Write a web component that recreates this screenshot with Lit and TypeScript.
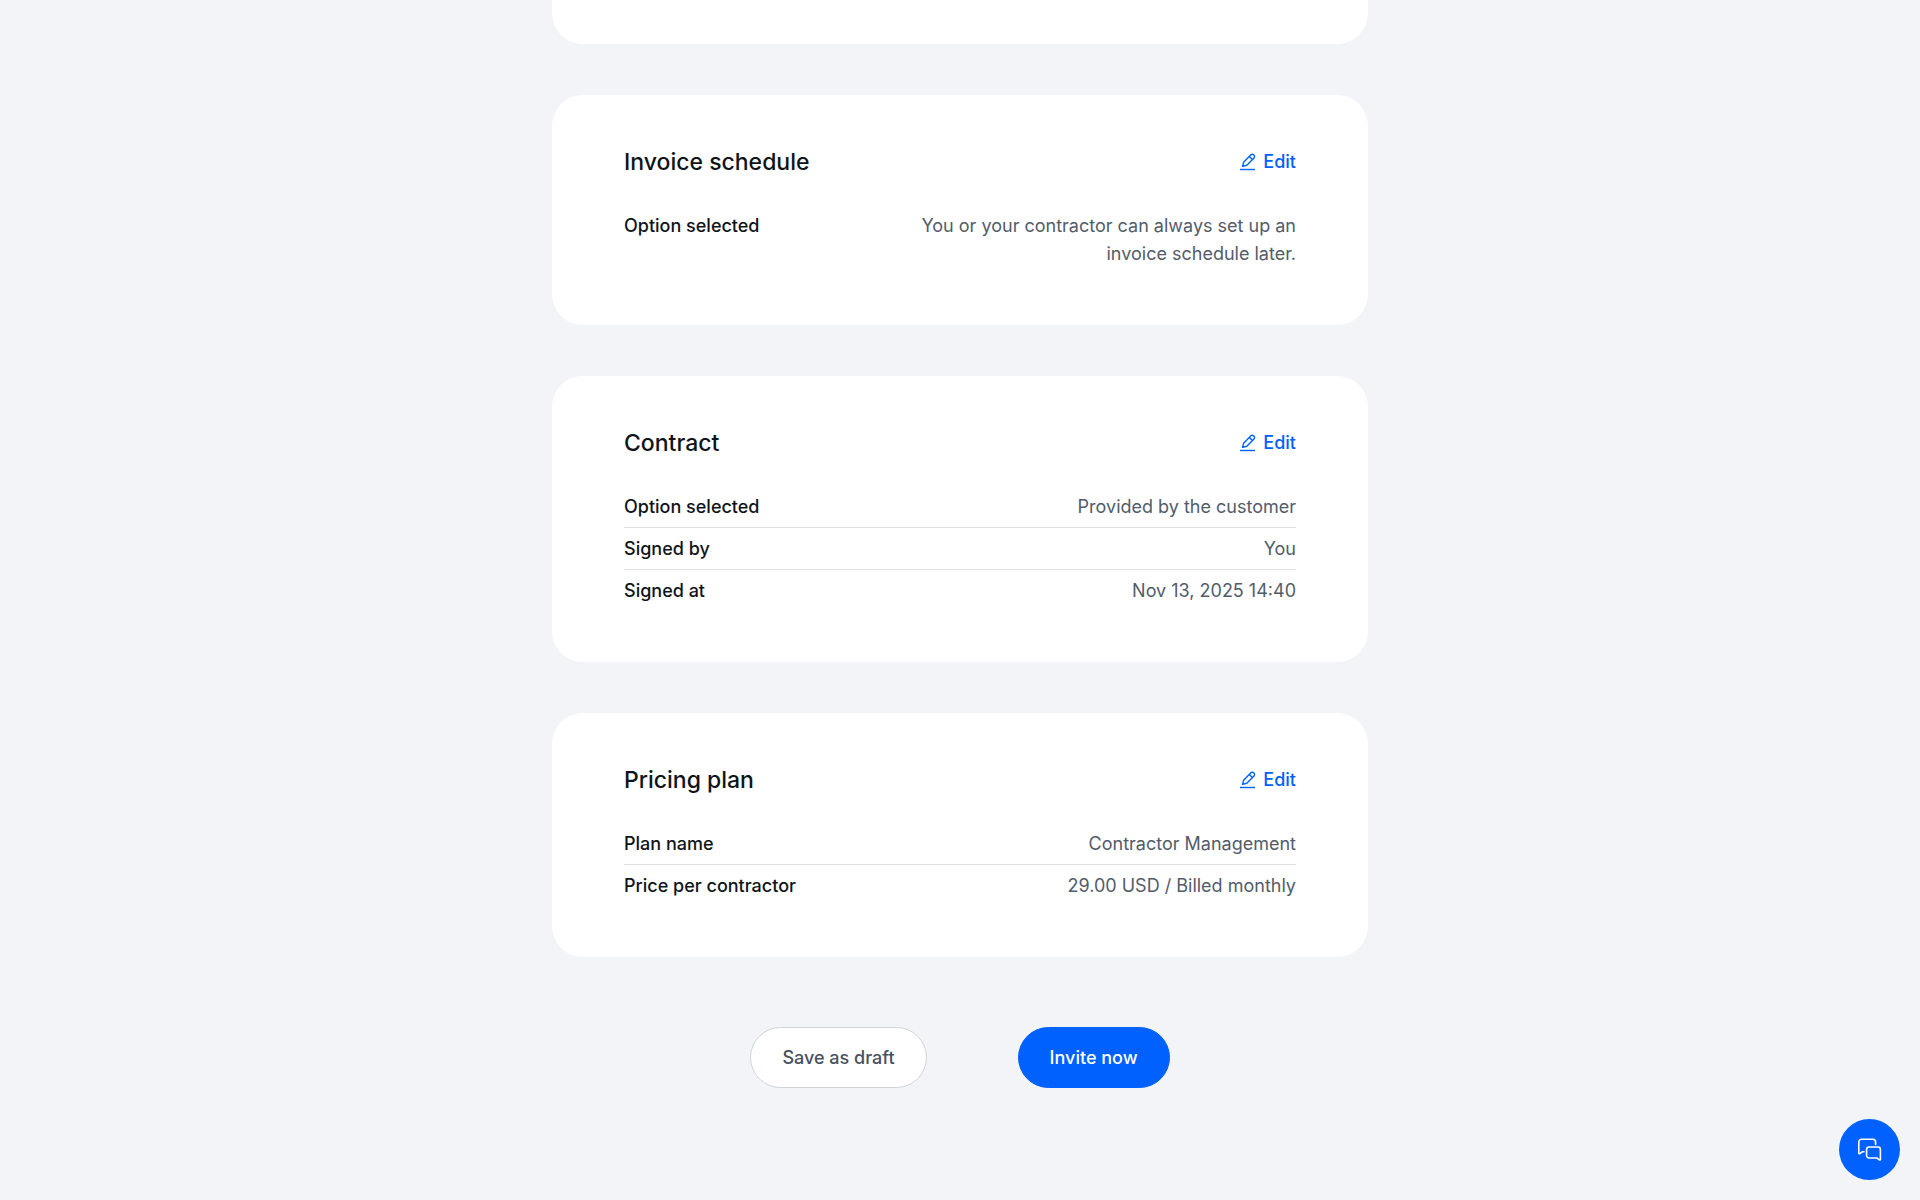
import { LitElement, html, css, svg } from "lit";
import { customElement, property } from "lit/decorators.js";

interface Row {
  label: string;
  value: string;
}

interface Section {
  title: string;
  rows: Row[];
}

const SECTIONS: Section[] = [
  {
    title: "Invoice schedule",
    rows: [
      {
        label: "Option selected",
        value: "You or your contractor can always set up an invoice schedule later.",
      },
    ],
  },
  {
    title: "Contract",
    rows: [
      { label: "Option selected", value: "Provided by the customer" },
      { label: "Signed by", value: "You" },
      { label: "Signed at", value: "Nov 13, 2025 14:40" },
    ],
  },
  {
    title: "Pricing plan",
    rows: [
      { label: "Plan name", value: "Contractor Management" },
      { label: "Price per contractor", value: "29.00 USD / Billed monthly" },
    ],
  },
];

const pencil = svg`
  <path d="M2.6 13.4 L3.6 9.2 L10.9 1.8 A1.8 1.8 0 0 1 13.5 1.8 L14 2.3 A1.8 1.8 0 0 1 14 4.9 L6.8 12.3 Z" />
  <path d="M9.4 3.4 L12.4 6.4" />
  <path d="M0 16.5 H15" />
`;

@customElement("summary-card")
export class SummaryCard extends LitElement {
  @property({ attribute: false }) section!: Section;

  static styles = css`
    :host {
      display: block;
      background: #fff;
      border-radius: 31px;
      padding: 51px 72px 57px;
    }
    .head {
      display: flex;
      align-items: center;
      justify-content: space-between;
      height: 32px;
      margin-bottom: 34px;
    }
    .title {
      margin: 0;
      font-size: 23px;
      line-height: 32px;
      font-weight: 500;
      color: #0f1419;
    }
    .edit {
      display: flex;
      align-items: center;
      gap: 7px;
      padding: 0;
      border: 0;
      background: none;
      font: inherit;
      font-weight: 500;
      color: #0061ff;
      cursor: pointer;
    }
    .icon {
      display: block;
      fill: none;
      stroke: currentColor;
      stroke-width: 1.4;
      stroke-linejoin: round;
    }
    .rows {
      margin: 0;
    }
    .row {
      display: flex;
      justify-content: space-between;
      gap: 24px;
    }
    .row + .row {
      margin-top: 6px;
      padding-top: 7px;
      border-top: 1px solid #dfe2e6;
    }
    .label {
      font-weight: 500;
      color: #0f1419;
    }
    .value {
      margin: 0;
      max-width: 60%;
      text-align: right;
      color: #525c6a;
    }
  `;

  render() {
    const { title, rows } = this.section;
    return html`
      <div class="head">
        <h2 class="title">${title}</h2>
        <button class="edit" type="button" aria-label="Edit ${title}">
          <svg class="icon" width="16" height="18" viewBox="0 0 16 18" aria-hidden="true">${pencil}</svg>
          Edit
        </button>
      </div>
      <dl class="rows">
        ${rows.map(
          (r) => html`<div class="row">
            <dt class="label">${r.label}</dt>
            <dd class="value">${r.value}</dd>
          </div>`
        )}
      </dl>
    `;
  }
}

@customElement("app-root")
export class AppRoot extends LitElement {
  static styles = css`
    :host {
      display: block;
      min-height: 100vh;
      background: #f2f4f8;
      font-family: Inter, "Liberation Sans", sans-serif;
      font-size: 18px;
      line-height: 28px;
    }
    .page {
      display: flex;
      flex-direction: column;
      gap: 51px;
      max-width: 816px;
      margin: 0 auto;
    }
    .previous {
      height: 44px;
      background: #fff;
      border-radius: 0 0 31px 31px;
    }
    .actions {
      display: flex;
      justify-content: center;
      gap: 91px;
      padding: 19px 0 51px;
    }
    .btn {
      height: 61px;
      padding: 0 31px;
      border: 1px solid #d0d4da;
      border-radius: 31px;
      background: #fff;
      font: inherit;
      font-weight: 500;
      color: #47505e;
      cursor: pointer;
    }
    .primary {
      border-color: #0061ff;
      background: #0061ff;
      color: #fff;
    }
    .chat {
      position: fixed;
      right: 20px;
      bottom: 20px;
      display: grid;
      place-items: center;
      width: 61px;
      height: 61px;
      padding: 0;
      border: 0;
      border-radius: 50%;
      background: #0061ff;
      color: #fff;
      cursor: pointer;
    }
    .bubbles {
      display: block;
      fill: none;
      stroke: currentColor;
      stroke-width: 1.6;
      stroke-linejoin: round;
      stroke-linecap: round;
    }
  `;

  render() {
    return html`
      <main class="page">
        <div class="previous"></div>
        ${SECTIONS.map((s) => html`<summary-card .section=${s}></summary-card>`)}
        <div class="actions">
          <button class="btn" type="button">Save as draft</button>
          <button class="btn primary" type="button">Invite now</button>
        </div>
      </main>
      <button class="chat" type="button" aria-label="Open chat">
        <svg class="bubbles" width="24" height="24" viewBox="0 0 24 24" aria-hidden="true">
          <path d="M17.6 6.4 V4 A2.8 2.8 0 0 0 14.8 1.2 H3.6 A2.8 2.8 0 0 0 .8 4 V15 C.8 15.8 1.4 16 1.9 15.6 L4.2 13.8 H6" />
          <path d="M11 9 H20 A2.4 2.4 0 0 1 22.4 11.4 V21.2 C22.4 22 21.8 22.2 21.3 21.8 L18.9 20 H11 A2.4 2.4 0 0 1 8.6 17.6 V11.4 A2.4 2.4 0 0 1 11 9 Z" />
        </svg>
      </button>
    `;
  }
}
